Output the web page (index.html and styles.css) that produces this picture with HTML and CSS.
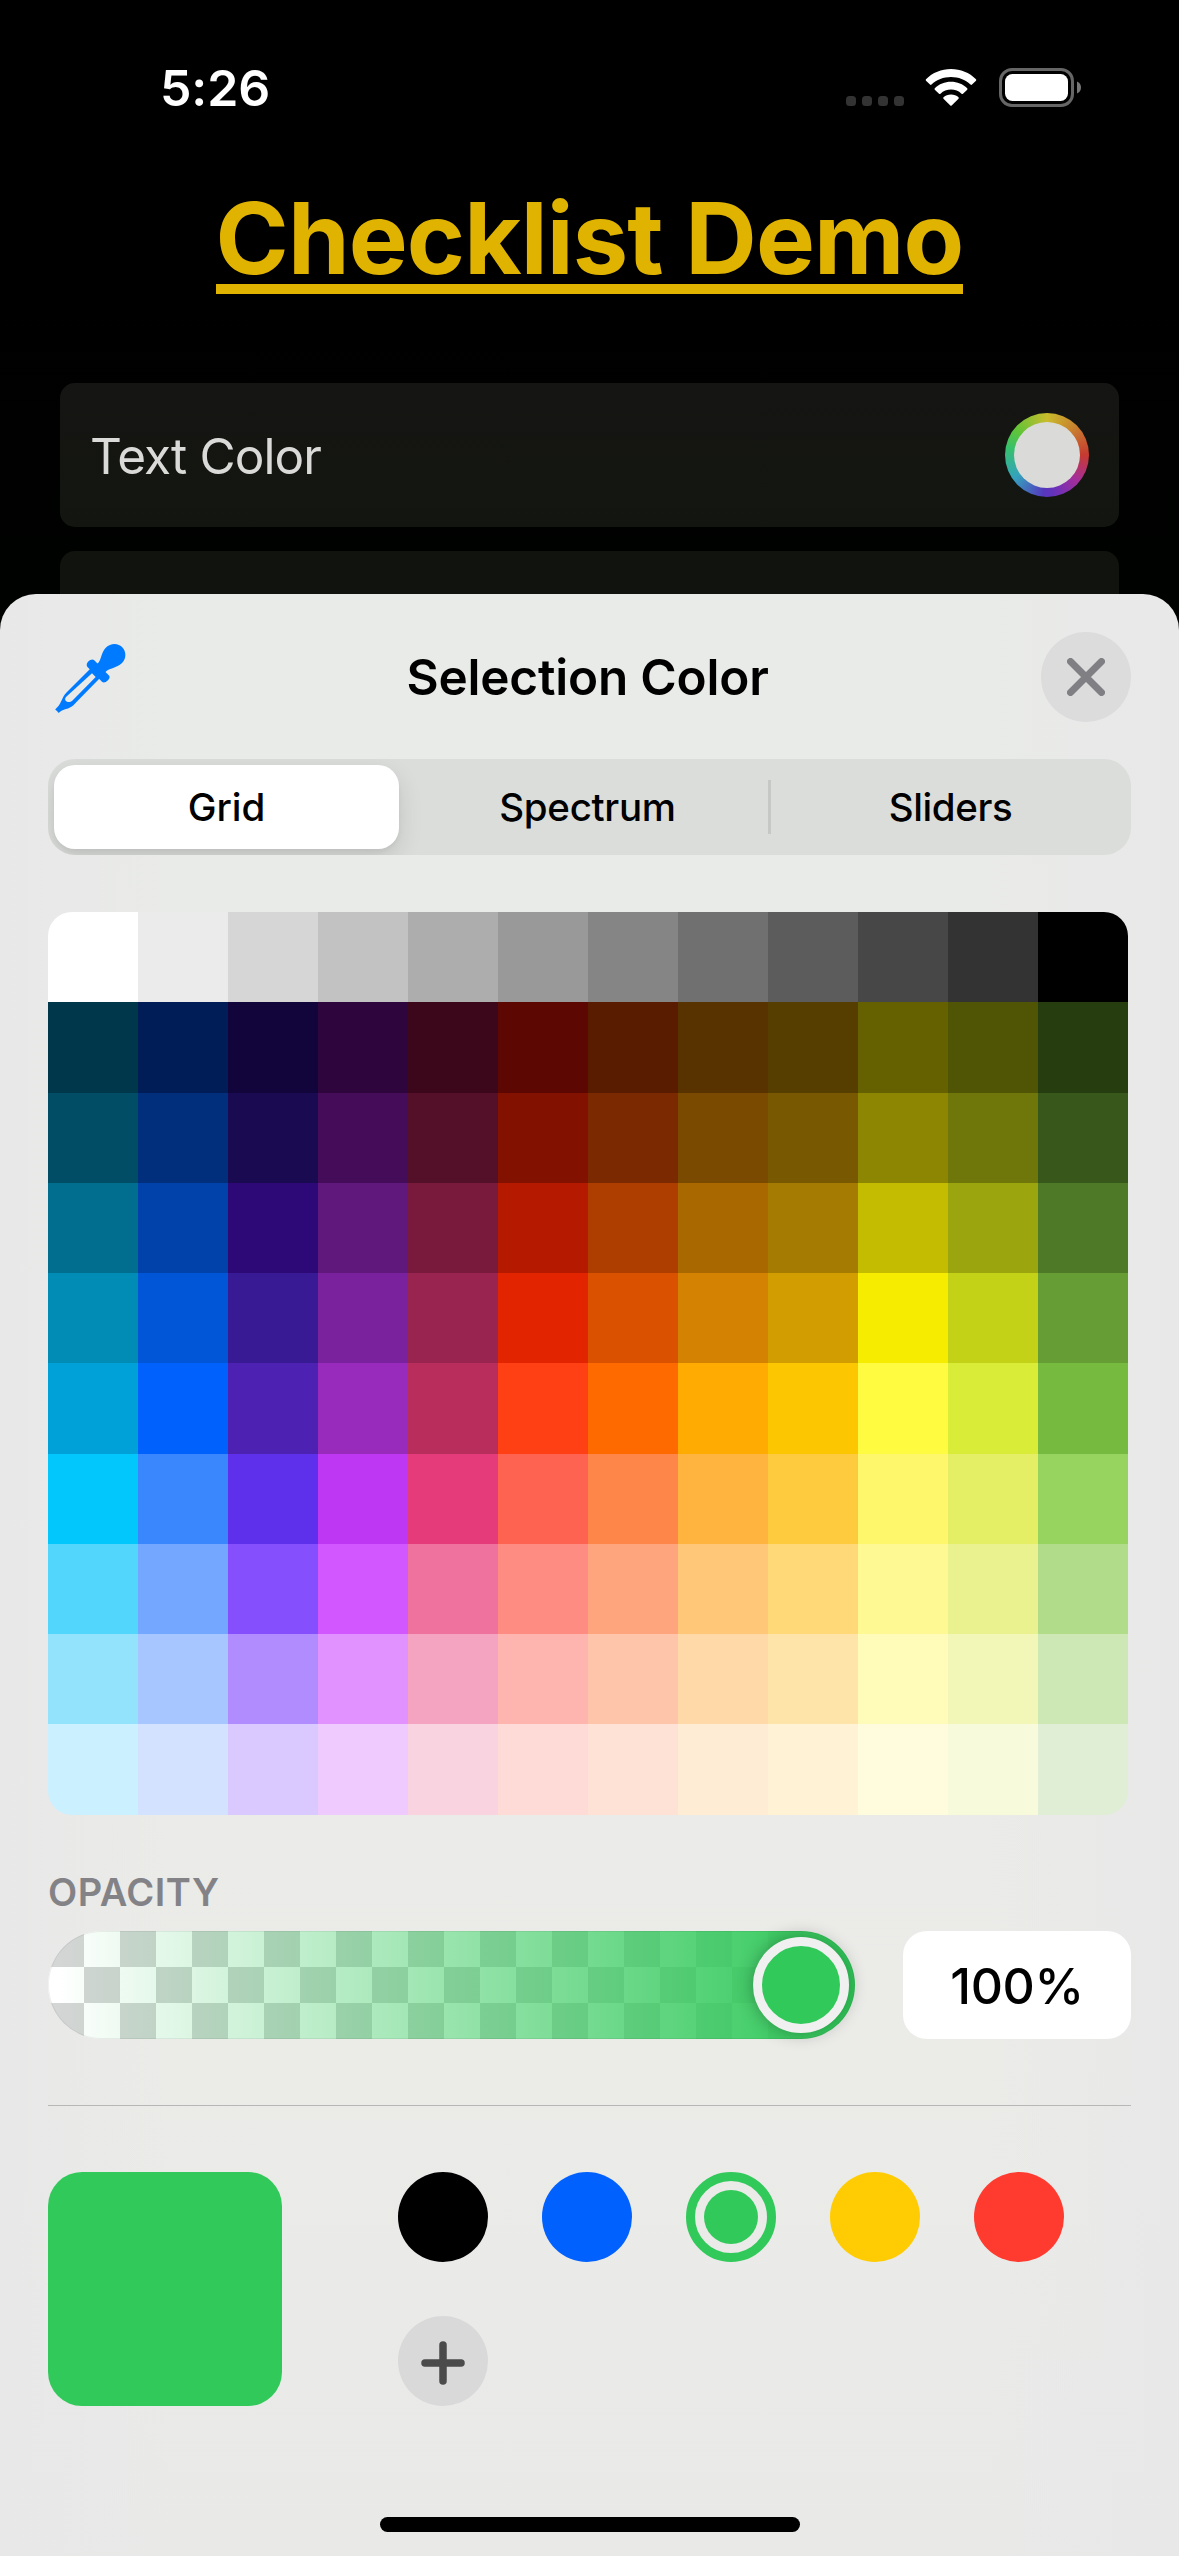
FILE: index.html
```html
<!DOCTYPE html>
<html lang="en">
<head>
<meta charset="utf-8">
<title>Checklist Demo</title>
<link rel="stylesheet" href="styles.css">
</head>
<body>
<div class="screen">
  <header class="status">
    <span class="time">5:26</span>
    <div class="indicators">
      <div class="signal"><i></i><i></i><i></i><i></i></div>
      <svg class="wifi" width="52" height="38" viewBox="0 0 52 38">
        <g fill="#fff">
          <path d="M26 0C35.500 0 44.500 3.700 51 10.200Q51.600 11 51 11.700L47 15.600Q46.200 16.200 45.500 15.500C40.300 10.600 33.500 7.900 26 7.900S11.700 10.600 6.500 15.500Q5.800 16.200 5 15.600L1 11.700Q.4 11 1 10.200C7.500 3.700 16.500 0 26 0Z"/>
          <path d="M26 12.700C32.200 12.700 37.900 15 42.200 19.200Q42.800 20 42.200 20.700L38 24.700Q37.300 25.300 36.500 24.700C33.700 22.100 30 20.600 26 20.600S18.300 22.100 15.500 24.700Q14.700 25.300 14 24.700L9.800 20.700Q9.200 20 9.800 19.200C14.100 15 19.800 12.700 26 12.700Z"/>
          <path d="M26 25.600C29 25.600 31.500 26.600 33.500 28.300Q34.100 29 33.500 29.700L26.700 36.500Q26 37.100 25.300 36.500L18.500 29.700Q17.900 29 18.500 28.300C20.500 26.600 23 25.600 26 25.600Z"/>
        </g>
      </svg>
      <svg class="battery" width="83" height="40" viewBox="0 0 83 40">
        <rect x="1.500" y="1.500" width="72" height="36" rx="11.500" fill="none" stroke="#666" stroke-width="3"/>
        <rect x="6" y="6" width="63" height="27" rx="7.500" fill="#fff"/>
        <path d="M78 13.500C80.500 14.500 82 16.800 82 19.500S80.500 24.500 78 25.500Z" fill="#777"/>
      </svg>
    </div>
  </header>

  <h1 class="title"><span>Checklist Demo</span></h1>

  <main class="options">
    <div class="option">
      <span>Text Color</span>
      <div class="well"><i></i></div>
    </div>
    <div class="option"></div>
  </main>

  <section class="sheet">
    <div class="sheet-head">
      <svg class="dropper" width="72" height="72" viewBox="0 0 72 72">
        <g fill="#007aff">
          <path d="M43.500 20.500C47.500 17.500 46.800 9.500 52 4.500C56.500-.2 64.500-.2 68.500 4.500C72.500 9 72.300 15.500 68 20C62.500 25.500 55.500 24.500 51.500 29L55 32.500C57.500 35.500 51 41.500 48 38.800L33.500 24C30.500 20.500 37 14.500 40 17Z"/>
          <path fill-rule="evenodd" d="M36.500 25.500L12.500 49.500C8 54 7.500 60 3.500 64Q1.200 66.300 1.300 66.700L3.300 68.200Q4.500 70.600 5.400 69.200Q7 67.500 10.500 66.500C14 65.500 18 64.500 21.500 60L45.500 35.500ZM38 30.300L41.700 34L18.500 57.500C14 61.500 8.500 57 12.500 53.500Z"/>
        </g>
      </svg>
      <h2>Selection Color</h2>
      <div class="close">
        <svg width="38" height="38" viewBox="0 0 38 38"><path d="M3.500 3.500L34.500 34.500M34.500 3.500L3.500 34.500" stroke="#7f7f84" stroke-width="7" stroke-linecap="round"/></svg>
      </div>
    </div>

    <div class="segments">
      <div class="segment selected">Grid</div>
      <div class="segment divided">Spectrum</div>
      <div class="segment last">Sliders</div>
    </div>

    <div class="palette" id="palette"></div>

    <div class="label">OPACITY</div>
    <div class="opacity">
      <div class="slider"><i class="knob"></i></div>
      <div class="value">100%</div>
    </div>

    <div class="rule"></div>

    <div class="saved">
      <div class="current"></div>
      <div class="dots">
        <i class="dot black"></i>
        <i class="dot blue"></i>
        <i class="dot green"></i>
        <i class="dot yellow"></i>
        <i class="dot red"></i>
        <div class="dot add">
          <svg width="44" height="44" viewBox="0 0 44 44"><path d="M22 4V40M4 22H40" stroke="#4b4b4b" stroke-width="7.500" stroke-linecap="round"/></svg>
        </div>
      </div>
    </div>
    <div class="home"></div>
  </section>
</div>
<script src="palette.js"></script>
</body>
</html>
```
FILE: styles.css
```css
* { box-sizing: border-box; }

body {
  margin: 0;
  background: #000;
  font-family: Inter, "Liberation Sans", sans-serif;
}

i { display: block; }

.screen {
  width: 1179px;
  height: 2556px;
  overflow: hidden;
  display: flex;
  flex-direction: column;
  background: linear-gradient(#000 300px, #000200 560px);
}

.status {
  height: 176px;
  flex: none;
  display: flex;
  justify-content: space-between;
  align-items: center;
  padding: 0 97px 0 160px;
  color: #fff;
}

.time {
  font-size: 50px;
  font-weight: 600;
  letter-spacing: -0.1px;
}

.indicators { display: flex; align-items: center; }
.signal { display: flex; gap: 6px; padding-top: 26px; margin-right: 21px; }
.signal i { width: 10px; height: 10px; border-radius: 3.500px; background: #333; }
.wifi { margin-right: 22px; }

.title {
  margin: 0;
  height: 207px;
  flex: none;
  display: flex;
  justify-content: center;
  align-items: flex-start;
  color: #dfb300;
  font-size: 99px;
  line-height: 124px;
  font-weight: 700;
  letter-spacing: -0.85px;
}
.title span { height: 118px; border-bottom: 10px solid #dfb300; white-space: nowrap; }

.options {
  height: 211px;
  flex: none;
  overflow: hidden;
  display: flex;
  flex-direction: column;
  gap: 24px;
  padding: 0 60px;
}

.option {
  height: 144px;
  flex: none;
  display: flex;
  align-items: center;
  justify-content: space-between;
  padding: 0 30px 0 30px;
  border-radius: 15px;
  background: linear-gradient(#151513, #131610);
  color: #dadbd9;
  font-size: 49.500px;
  letter-spacing: -0.9px;
}
.option span { padding-top: 2px; }
.option + .option { background: #11140e; }

.well {
  width: 84px;
  height: 84px;
  padding: 9px;
  border-radius: 50%;
  background: conic-gradient(#c9bc2c, #c8802f 45deg, #c63a30 90deg, #a52d9a 130deg, #6532bc 170deg, #5538bd 185deg, #34a3bd 235deg, #36c06c 280deg, #62c437 310deg, #c9bc2c);
}
.well i { width: 66px; height: 66px; border-radius: 50%; background: #dadbd9; }

.sheet {
  height: 1962px;
  flex: none;
  display: flex;
  flex-direction: column;
  padding: 38px 48px 0;
  border-radius: 36px 36px 0 0;
  background: linear-gradient(90deg, #e8e8e8, transparent 14%, transparent 84%, #e8e8e8), linear-gradient(#e9ebe8, #ebebe8 75%, #e9e9e8);
}

.sheet-head {
  height: 90px;
  display: flex;
  align-items: center;
  justify-content: space-between;
}
.dropper { margin: 4px 0 0 6px; }
.sheet-head h2 {
  margin: 0 0 0 8px;
  font-size: 49.500px;
  font-weight: 600;
  letter-spacing: -0.2px;
}
.close {
  width: 90px;
  height: 90px;
  display: flex;
  align-items: center;
  justify-content: center;
  border-radius: 50%;
  background: #dbdcdb;
}

.segments {
  height: 96px;
  margin-top: 37px;
  padding: 6px;
  display: grid;
  grid-template-columns: 345px 372px 354px;
  border-radius: 27px;
  overflow: hidden;
  background: #dbdddb;
  font-size: 38.500px;
  font-weight: 500;
}
.segment {
  display: flex;
  align-items: center;
  justify-content: center;
}
.selected {
  border-radius: 21px;
  background: #fff;
  box-shadow: 0 9px 24px rgba(0, 0, 0, .12), 0 3px 4px rgba(0, 0, 0, .04);
}
.divided {
  padding-left: 5px;
  letter-spacing: -0.3px;
  background: linear-gradient(#c6c8c6, #c6c8c6) right center / 3px 54px no-repeat;
}
.last { padding-left: 5px; letter-spacing: -0.4px; }

.palette {
  width: 1080px;
  height: 903px;
  margin-top: 57px;
  display: grid;
  grid-template-columns: repeat(12, 90px);
  grid-template-rows: 90px 91px 90px 90px 90px 91px 90px 90px 90px 91px;
  border-radius: 24px;
  overflow: hidden;
}

.label {
  height: 116px;
  padding-top: 53px;
  color: #838387;
  font-size: 38px;
  line-height: 48px;
  font-weight: 600;
  letter-spacing: 0.5px;
}

.opacity { display: flex; justify-content: space-between; }
.slider {
  width: 807px;
  height: 108px;
  display: flex;
  justify-content: flex-end;
  padding: 6px;
  border-radius: 54px;
  background:
    linear-gradient(90deg, rgba(50, 201, 91, 0) 10px, #32c95b 790px),
    conic-gradient(#fff 25%, #d4d5d5 0 50%, #fff 0 75%, #d4d5d5 0) 0 0 / 72px 72px;
  box-shadow: inset 0 0 0 1px rgba(0, 0, 0, .06);
}
.knob {
  width: 96px;
  height: 96px;
  border: 9px solid #f1f0f1;
  border-radius: 50%;
  background: #32c95b;
  box-shadow: 0 0 18px rgba(0, 0, 0, .3);
}
.value {
  width: 228px;
  height: 108px;
  display: flex;
  align-items: center;
  justify-content: center;
  padding-top: 1px;
  border-radius: 24px;
  background: #fff;
  font-size: 50px;
  font-weight: 500;
  letter-spacing: -0.4px;
}

.rule { height: 1px; margin-top: 66px; background: #b7b7b5; }

.saved { display: flex; gap: 116px; margin-top: 66px; }
.current { width: 234px; height: 234px; border-radius: 34px; background: #32c95b; }
.dots {
  display: grid;
  grid-template-columns: repeat(5, 90px);
  grid-auto-rows: 90px;
  gap: 54px;
}
.dot { border-radius: 50%; }
.black { background: #000; }
.blue { background: #0061fe; }
.green { border: 9px solid #32c95b; padding: 9px; background: #32c95b content-box; }
.yellow { background: #ffcc03; }
.red { background: #ff3b30; }
.add { display: flex; align-items: center; justify-content: center; padding-top: 3px; background: #d9d9d9; }

.home {
  width: 420px;
  height: 15px;
  margin: 111px auto 0;
  border-radius: 8px;
  background: #000;
}
```
FILE: palette.js
```js
const rows = [
  "FFFFFF EBEBEB D6D6D6 C2C2C2 ADADAD 999999 858585 707070 5C5C5C 474747 333333 000000",
  "00374A 011D57 11053B 2E063D 3C071B 5C0701 5A1C00 583300 563D00 666100 4F5504 263E0F",
  "004D65 012F7B 1A0A52 450D59 551029 831100 7B2900 7A4A00 785800 8D8602 6F760A 38571A",
  "016E8F 0042A9 2C0977 61187C 791A3D B51A00 AD3E00 A96800 A67B01 C4BC00 9BA50E 4E7A27",
  "008CB4 0056D6 371A94 7A219E 99244F E22400 DA5100 D38301 D19D01 F5EC00 C3D117 669D34",
  "00A1D8 0061FD 4D22B2 982ABC B92D5D FF4015 FF6A00 FFAB01 FCC700 FEFB41 D9EC37 76BB40",
  "01C7FC 3A87FD 5E30EB BE38F3 E63B7A FE6250 FE8648 FEB43F FECB3E FFF76B E4EF65 96D35F",
  "52D6FC 74A7FF 864FFD D357FE EE719E FF8C82 FFA57D FFC777 FFD977 FFF994 EAF28F B1DD8B",
  "93E3FC A7C6FF B18CFE E292FE F4A4C0 FFB5AF FFC5AB FFD9A8 FEE4A8 FFFBB9 F2F7B7 CDE8B5",
  "CBF0FF D3E2FF D9C9FE EFCAFF F9D3E0 FFDBD8 FFE2D6 FFECD4 FFF2D5 FEFCDD F7FADB DFEED4"
];
const palette = document.getElementById("palette");
for (const color of rows.join(" ").split(" ")) {
  const cell = document.createElement("i");
  cell.style.background = "#" + color;
  palette.append(cell);
}
```
